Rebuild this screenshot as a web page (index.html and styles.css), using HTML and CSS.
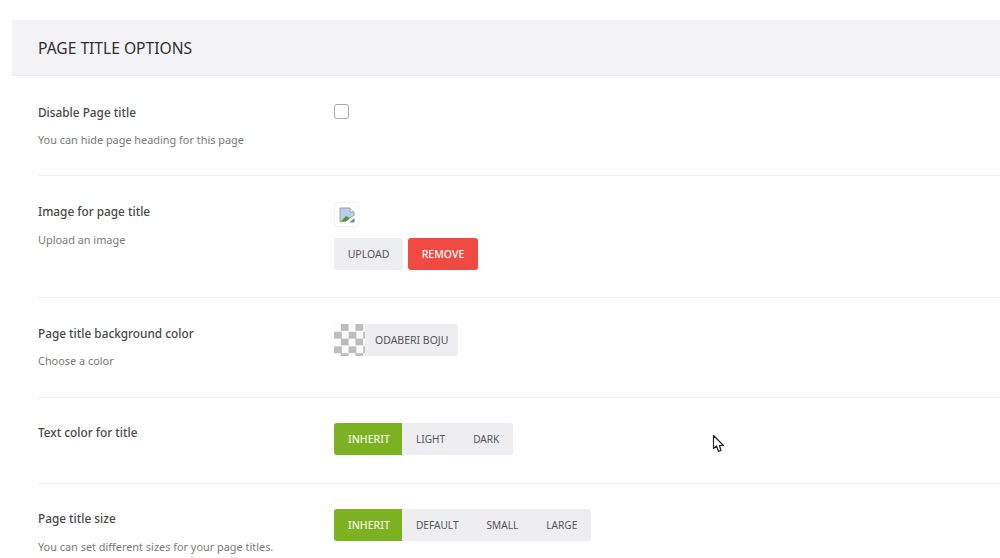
FILE: index.html
```html
<!DOCTYPE html>
<html lang="en">
<head>
<meta charset="utf-8">
<title>Page title options</title>
<link rel="stylesheet" href="styles.css">
</head>
<body>
<main class="panel">
  <h2 class="panel-title">PAGE TITLE OPTIONS</h2>
  <section class="row row-a">
    <div class="info">
      <h3 class="label">Disable Page title</h3>
      <p class="hint">You can hide page heading for this page</p>
    </div>
    <div class="control"><span class="checkbox"></span></div>
  </section>
  <section class="row row-b">
    <div class="info">
      <h3 class="label">Image for page title</h3>
      <p class="hint hint-loose">Upload an image</p>
    </div>
    <div class="control">
      <span class="thumb">
        <svg width="16" height="16" viewBox="0 0 16 16">
          <path d="M1 1H11L15 5V8.500L11 10.500 8 13.500 1 15Z" fill="#b9cdee" stroke="#a0a0a0"/>
          <path d="M11 1V5H15" fill="#fff" stroke="#a0a0a0"/>
          <path d="M2 14.500L7 9 10.500 11 7 14.500Z" fill="#55962c"/>
          <path d="M11 15L15.500 11V15.500H11Z" fill="#7f857c"/>
        </svg>
      </span>
      <div class="btn-line">
        <span class="btn">UPLOAD</span>
        <span class="btn btn-red">REMOVE</span>
      </div>
    </div>
  </section>
  <section class="row row-e">
    <div class="info">
      <h3 class="label">Page title background color</h3>
      <p class="hint">Choose a color</p>
    </div>
    <div class="control">
      <span class="picker"><span class="swatch"></span><span class="picker-text">ODABERI BOJU</span></span>
    </div>
  </section>
  <section class="row row-c">
    <div class="info">
      <h3 class="label">Text color for title</h3>
    </div>
    <div class="control">
      <div class="group">
        <span class="seg seg-on">INHERIT</span><span class="seg">LIGHT</span><span class="seg">DARK</span>
      </div>
    </div>
  </section>
  <section class="row row-d">
    <div class="info">
      <h3 class="label">Page title size</h3>
      <p class="hint hint-loose">You can set different sizes for your page titles.</p>
    </div>
    <div class="control">
      <div class="group">
        <span class="seg seg-on">INHERIT</span><span class="seg">DEFAULT</span><span class="seg">SMALL</span><span class="seg">LARGE</span>
      </div>
    </div>
  </section>
</main>
<svg class="cursor" width="13" height="20" viewBox="0 0 13 20">
  <path d="M1.500 1.500V14.500L4.500 12 6.500 17.500 9 16.500 7.500 11.500H11.500Z" fill="#fff" stroke="#222" stroke-width="1.200" stroke-linejoin="round"/>
</svg>
</body>
</html>
```
FILE: styles.css
```css
* { box-sizing: border-box; }
html, body { margin: 0; height: 558px; overflow: hidden; background: #fff; }
body { font-family: "Noto Sans", "Open Sans", sans-serif; color: #444; position: relative; }
.panel { margin: 20px 0 0 12px; width: 988px; }
.panel-title {
  margin: 0;
  height: 56px;
  padding-left: 26px;
  display: flex;
  align-items: center;
  background: #f3f3f5;
  border-bottom: 1px solid #ececee;
  font-size: 15.6px;
  font-weight: 400;
  color: #2f2f2f;
}
.row {
  margin-left: 26px;
  display: flex;
  border-bottom: 1px solid #f0f0f0;
}
.row-a { height: 100px; padding-top: 27px; }
.row-b { height: 122px; padding-top: 26px; }
.row-e { height: 100px; padding-top: 26px; }
.row-c { height: 86px; padding-top: 25px; }
.row-d { height: 74px; padding-top: 25px; border-bottom: 0; }
.row-a .control { padding-top: 1px; }
.info { width: 296px; flex: none; }
.label { margin: 0; font-size: 11.8px; line-height: 18px; font-weight: 500; color: #484848; }
.hint { margin: 10px 0 0; font-size: 10.9px; line-height: 18px; color: #7a7a7a; }
.hint-loose { margin-top: 11px; }
.checkbox {
  display: block;
  width: 15px;
  height: 15px;
  background: #fff;
  border: 1px solid #a8a8a8;
  border-radius: 3px;
}
.thumb {
  display: flex;
  align-items: center;
  justify-content: center;
  width: 25px;
  height: 25px;
  background: #fff;
  border: 1px solid #f2f2f2;
  border-radius: 3px;
}
.btn-line { display: flex; gap: 5px; margin-top: 11px; }
.btn {
  display: flex;
  align-items: center;
  justify-content: center;
  width: 69px;
  height: 32px;
  padding-bottom: 1px;
  background: #eeeef0;
  border-radius: 3px;
  font-size: 10.5px;
  color: #555;
}
.btn-red { width: 70px; background: #f04a43; color: #fff; font-weight: 500; }
.picker {
  display: flex;
  align-items: center;
  width: 124px;
  height: 32px;
  background: #eeeef0;
  border-radius: 3px;
  overflow: hidden;
}
.swatch {
  width: 31px;
  height: 32px;
  background: repeating-conic-gradient(#bdbdbd 0 25%, #fbfbfb 0 50%) 0 0 / 14.6px 14.6px;
}
.picker-text { margin-left: 10px; font-size: 10.5px; color: #555; }
.group { display: inline-flex; height: 32px; background: #eeeef0; border-radius: 3px; overflow: hidden; }
.seg {
  display: flex;
  align-items: center;
  padding: 0 14px;
  font-size: 10.1px;
  color: #555;
}
.seg-on { width: 68px; background: #7cb122; color: #f2f7e6; font-size: 10.5px; font-weight: 500; }
.cursor { position: absolute; left: 712px; top: 434px; }
```
